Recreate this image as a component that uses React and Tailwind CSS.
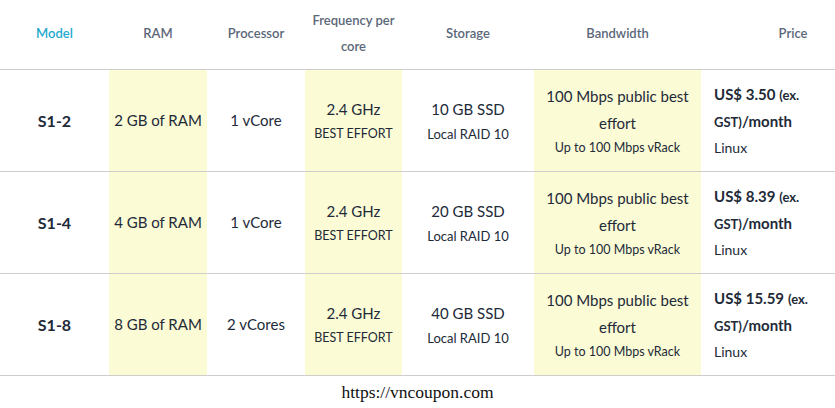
import React from "react";

const rows = [
  { model: "S1-2", ram: "2 GB of RAM", cpu: "1 vCore", disk: "10 GB SSD", price: "US$ 3.50" },
  { model: "S1-4", ram: "4 GB of RAM", cpu: "1 vCore", disk: "20 GB SSD", price: "US$ 8.39" },
  { model: "S1-8", ram: "8 GB of RAM", cpu: "2 vCores", disk: "40 GB SSD", price: "US$ 15.59" },
];

const yellow = "bg-[#fbfbd6]";

export default function App() {
  return (
    <div className="w-[835px] h-[408px] bg-white overflow-hidden font-['Lato',sans-serif] text-[#222a38]">
      <div className="w-[885px]">
        <div className="flex h-[70px] pb-[4px] text-[13px] font-semibold text-[#5b6779] text-center leading-[26px] border-b border-[#cdcdcd]">
          <div className="w-[109px] flex items-center justify-center text-[#1fa9cf]">Model</div>
          <div className="w-[98px] flex items-center justify-center">RAM</div>
          <div className="w-[98px] flex items-center justify-center">Processor</div>
          <div className="w-[97px] flex items-center justify-center">Frequency per core</div>
          <div className="w-[132px] flex items-center justify-center">Storage</div>
          <div className="w-[167px] flex items-center justify-center">Bandwidth</div>
          <div className="w-[184px] flex items-center justify-center">Price</div>
        </div>
        {rows.map((r) => (
          <div key={r.model} className="flex h-[102px] text-center border-b border-[#cdcdcd]">
            <div className="w-[109px] flex items-center justify-center text-[16px] font-bold">{r.model}</div>
            <div className={`w-[98px] flex items-center justify-center text-[15px] ${yellow}`}>{r.ram}</div>
            <div className="w-[98px] flex items-center justify-center text-[15px]">{r.cpu}</div>
            <div className={`w-[97px] flex flex-col items-center justify-center ${yellow}`}>
              <span className="text-[15px] leading-[27px]">2.4 GHz</span>
              <span className="text-[12.5px] leading-[22px]">BEST EFFORT</span>
            </div>
            <div className="w-[132px] flex flex-col items-center justify-center">
              <span className="text-[15px] leading-[27px]">{r.disk}</span>
              <span className="text-[13px] leading-[22px]">Local RAID 10</span>
            </div>
            <div className={`w-[167px] flex flex-col items-center justify-center ${yellow}`}>
              <span className="text-[15px] leading-[27px]">100 Mbps public best effort</span>
              <span className="text-[12.5px] leading-[22px]">Up to 100 Mbps vRack</span>
            </div>
            <div className="w-[184px] flex flex-col justify-center text-left pl-[13px] pr-[50px]">
              <div className="font-bold leading-[26px]">
                <span className="text-[15px]">{r.price}</span>{" "}
                <span className="text-[13px]">(ex.</span>
                <br />
                <span className="text-[13px]">GST)</span>
                <span className="text-[15px]">/month</span>
              </div>
              <div className="text-[14px] leading-[26px]">Linux</div>
            </div>
          </div>
        ))}
      </div>
      <div className="text-center font-['Liberation_Serif',serif] text-[17.5px] text-[#111] mt-[3px]">
        https://vncoupon.com
      </div>
    </div>
  );
}
